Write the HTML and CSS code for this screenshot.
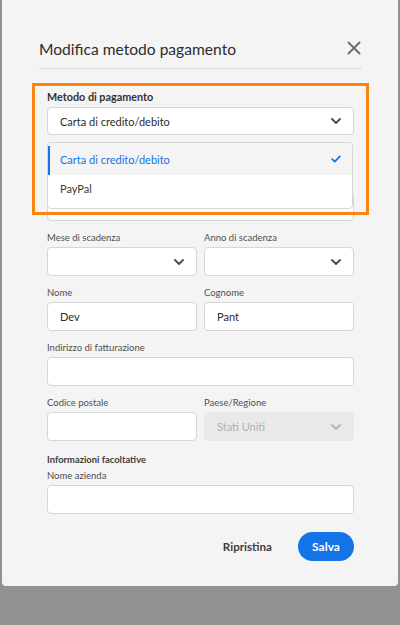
FILE: index.html
```html
<!DOCTYPE html>
<html lang="it">
<head>
<meta charset="utf-8">
<title>Modifica metodo pagamento</title>
<link rel="stylesheet" href="styles.css">
</head>
<body>
<div class="modal">
  <div class="header">
    <h1 class="title">Modifica metodo pagamento</h1>
    <button class="close" type="button" aria-label="Chiudi">
      <svg width="14" height="14" viewBox="0 0 14 14"><path d="M1.5 1.5 L12.5 12.5 M12.5 1.5 L1.5 12.5" stroke="#6e6e6e" stroke-width="2" stroke-linecap="round" fill="none"/></svg>
    </button>
  </div>
  <div class="divider"></div>
  <form class="form">
    <div class="field field-method">
      <div class="label label-strong">Metodo di pagamento</div>
      <div class="control select select-main">
        <span class="value">Carta di credito/debito</span>
        <svg class="chev" width="10" height="6" viewBox="0 0 10 6"><path d="M1 1 L5 5 L9 1" stroke="#4b4b4b" stroke-width="1.8" fill="none" stroke-linecap="round" stroke-linejoin="round"/></svg>
      </div>
      <ul class="menu">
        <li class="option option-selected">
          <span>Carta di credito/debito</span>
          <svg width="10" height="8" viewBox="0 0 10 8"><path d="M1.2 4.2 L3.8 6.6 L8.8 1.4" stroke="#1473e6" stroke-width="1.8" fill="none" stroke-linecap="round" stroke-linejoin="round"/></svg>
        </li>
        <li class="option">PayPal</li>
      </ul>
    </div>
    <div class="field field-card">
      <div class="control"></div>
    </div>
    <div class="row">
      <div class="field">
        <div class="label">Mese di scadenza</div>
        <div class="control select"><span class="value"></span><svg class="chev" width="10" height="6" viewBox="0 0 10 6"><path d="M1 1 L5 5 L9 1" stroke="#4b4b4b" stroke-width="1.8" fill="none" stroke-linecap="round" stroke-linejoin="round"/></svg></div>
      </div>
      <div class="field">
        <div class="label">Anno di scadenza</div>
        <div class="control select"><span class="value"></span><svg class="chev" width="10" height="6" viewBox="0 0 10 6"><path d="M1 1 L5 5 L9 1" stroke="#4b4b4b" stroke-width="1.8" fill="none" stroke-linecap="round" stroke-linejoin="round"/></svg></div>
      </div>
    </div>
    <div class="row">
      <div class="field">
        <div class="label">Nome</div>
        <div class="control"><span class="value">Dev</span></div>
      </div>
      <div class="field">
        <div class="label">Cognome</div>
        <div class="control"><span class="value">Pant</span></div>
      </div>
    </div>
    <div class="field">
      <div class="label">Indirizzo di fatturazione</div>
      <div class="control"></div>
    </div>
    <div class="row">
      <div class="field">
        <div class="label">Codice postale</div>
        <div class="control"></div>
      </div>
      <div class="field">
        <div class="label">Paese/Regione</div>
        <div class="control select disabled"><span class="value">Stati Uniti</span><svg class="chev" width="10" height="6" viewBox="0 0 10 6"><path d="M1 1 L5 5 L9 1" stroke="#b5b5b5" stroke-width="1.8" fill="none" stroke-linecap="round" stroke-linejoin="round"/></svg></div>
      </div>
    </div>
    <div class="section-title">Informazioni facoltative</div>
    <div class="field field-company">
      <div class="label">Nome azienda</div>
      <div class="control"></div>
    </div>
    <div class="actions">
      <button type="button" class="btn-text">Ripristina</button>
      <button type="button" class="btn-primary">Salva</button>
    </div>
  </form>
  <div class="annotation"></div>
</div>
</body>
</html>
```
FILE: styles.css
```css
* { box-sizing: border-box; }
html, body { margin: 0; padding: 0; }
body {
  background: #919191;
  font-family: Lato, "Liberation Sans", sans-serif;
  width: 400px;
  height: 625px;
  overflow: hidden;
}
.modal {
  position: relative;
  margin-left: 2px;
  width: 396px;
  height: 586px;
  background: #f4f4f4;
  border-radius: 0 0 4px 4px;
  padding: 38px 36px 0 37px;
}
.header {
  display: flex;
  align-items: center;
  justify-content: space-between;
  height: 20px;
}
.title {
  margin: 0;
  padding-top: 2px;
  font-size: 15.6px;
  line-height: 20px;
  font-weight: 400;
  color: #2c2c2c;
}
.close {
  border: 0;
  background: none;
  padding: 0;
  margin-right: 1px;
  width: 14px;
  height: 14px;
  display: flex;
}
.divider {
  margin-top: 10px;
  height: 1px;
  background: #dcdcdc;
}
.form {
  margin-top: 20px;
  padding: 0 8px;
}
.form > * + * { margin-top: 11px; }
.form > .field-card { margin-top: 57px; }
.form > .section-title { margin-top: 13px; }
.form > .field-company { margin-top: 4px; }
.form > .actions { margin-top: 18px; }
.field { display: flex; flex-direction: column; }
.field-method { position: relative; }
.label {
  font-size: 9.5px;
  line-height: 12px;
  height: 12px;
  color: #505050;
  margin-bottom: 3px;
  white-space: nowrap;
}
.label-strong {
  font-size: 10.8px;
  line-height: 15px;
  height: 15px;
  font-weight: 700;
  color: #323232;
  margin-bottom: 3px;
}
.control {
  height: 29px;
  background: #fff;
  border: 1px solid #d6d6d6;
  border-radius: 4px;
  display: flex;
  align-items: center;
  justify-content: space-between;
  padding: 0 12px 0 12px;
}
.select-main { height: 28px; }
.value {
  font-size: 11px;
  color: #2c2c2c;
}
.select .chev { flex: none; }
.disabled {
  background: #e9e9e9;
  border-color: #e9e9e9;
}
.disabled .value { color: #b0b0b0; }
.menu {
  position: absolute;
  top: 53px;
  left: 0;
  right: 1px;
  margin: 0;
  padding: 0 0 7px 0;
  list-style: none;
  background: #fff;
  border: 1px solid #d6d6d6;
  border-radius: 4px;
  overflow: hidden;
  z-index: 2;
}
.option {
  position: relative;
  height: 26px;
  display: flex;
  align-items: center;
  justify-content: space-between;
  padding: 0 11px 0 12px;
  font-size: 11px;
  color: #3a3a3a;
}
.option-selected {
  height: 32px;
  background: #f4f4f4;
  color: #1473e6;
}
.option-selected::before {
  content: "";
  position: absolute;
  left: 0;
  top: 3px;
  bottom: 0;
  width: 2px;
  background: #1473e6;
}
.row {
  display: grid;
  grid-template-columns: 1fr 1fr;
  column-gap: 7px;
}
.section-title {
  font-size: 9.4px;
  line-height: 12px;
  font-weight: 700;
  color: #3c3c3c;
}
.actions {
  display: flex;
  justify-content: flex-end;
  align-items: center;
}
.btn-text {
  border: 0;
  background: none;
  font-family: inherit;
  font-size: 11.6px;
  font-weight: 700;
  color: #3f3f3f;
  padding: 0 14px;
  margin-right: 12px;
  height: 29px;
}
.btn-primary {
  border: 0;
  background: #1473e6;
  color: #fff;
  font-family: inherit;
  font-size: 12px;
  font-weight: 700;
  width: 56px;
  height: 29px;
  border-radius: 15px;
  padding: 0;
}
.annotation {
  position: absolute;
  left: 30px;
  top: 83px;
  width: 337px;
  height: 132px;
  border: 3px solid #f7850f;
  pointer-events: none;
}
```
